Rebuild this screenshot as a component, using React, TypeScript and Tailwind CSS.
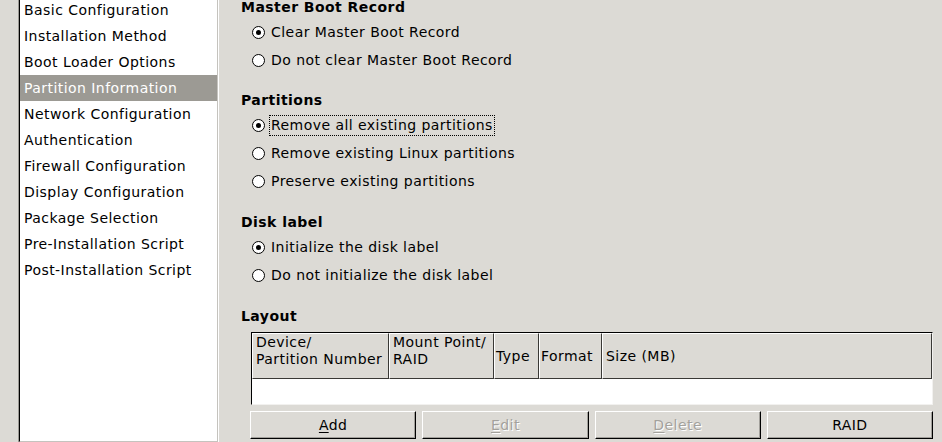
import React from "react";

const items = [
  "Basic Configuration",
  "Installation Method",
  "Boot Loader Options",
  "Partition Information",
  "Network Configuration",
  "Authentication",
  "Firewall Configuration",
  "Display Configuration",
  "Package Selection",
  "Pre-Installation Script",
  "Post-Installation Script",
];

function Radio({ label, checked, focus }: { label: string; checked?: boolean; focus?: boolean }) {
  return (
    <div className="h-[28px] flex items-center pl-[11px]">
      <span className="w-[13px] h-[13px] rounded-full border border-black bg-white flex items-center justify-center shrink-0">
        {checked && <span className="w-[5px] h-[5px] rounded-full bg-black" />}
      </span>
      <span
        className={
          "ml-[4px] px-[1px] h-[21px] flex items-center border " +
          (focus ? "border-dotted border-black" : "border-transparent")
        }
      >
        {label}
      </span>
    </div>
  );
}

function Heading({ children, className = "" }: { children: React.ReactNode; className?: string }) {
  return <div className={"h-[22px] flex items-center font-bold " + className}>{children}</div>;
}

function HeaderCell({ children, className = "", top }: { children: React.ReactNode; className?: string; top?: boolean }) {
  return (
    <div
      className={
        "h-full border-l border-t border-white border-r border-b border-r-[#3a3936] border-b-[#3a3936] px-[3px] flex leading-[17px] whitespace-nowrap " +
        (top ? "items-start " : "items-center ") +
        className
      }
    >
      {children}
    </div>
  );
}

function Button({ children, disabled }: { children: React.ReactNode; disabled?: boolean }) {
  return (
    <div
      className={
        "h-[28px] border border-t-white border-l-white border-r-black border-b-black shadow-[inset_-1px_-1px_0_#a19f9a] flex items-center justify-center " +
        (disabled ? "text-[#a3a19c] [text-shadow:1px_1px_0_#ffffff]" : "text-black")
      }
    >
      {children}
    </div>
  );
}

export default function App() {
  return (
    <div className="w-[942px] h-[442px] overflow-hidden bg-[#dcdad5] flex [font-family:'DejaVu_Sans',Verdana,sans-serif] text-[14px] tracking-[0.45px] text-black">
      {/* sidebar */}
      <div className="ml-[18px] w-[201px] h-[443px] shrink-0 border-l border-l-[#9a9893] border-r border-r-white border-b border-b-white">
        <div className="h-full bg-white border-l border-l-black border-r border-r-[#c5c3be] border-b border-b-[#c5c3be] overflow-hidden">
          <div className="-mt-[3px]">
            {items.map((it) => (
              <div
                key={it}
                className={
                  "h-[26px] flex items-center pl-[4px] whitespace-nowrap " +
                  (it === "Partition Information" ? "bg-[#9c9a94] text-white" : "")
                }
              >
                {it}
              </div>
            ))}
          </div>
        </div>
      </div>

      {/* main panel */}
      <div className="flex-1 pl-[22px] flex flex-col">
        <Heading className="-mt-[4px]">Master Boot Record</Heading>
        <Radio label="Clear Master Boot Record" checked />
        <Radio label="Do not clear Master Boot Record" />

        <Heading className="mt-[15px]">Partitions</Heading>
        <Radio label="Remove all existing partitions" checked focus />
        <Radio label="Remove existing Linux partitions" />
        <Radio label="Preserve existing partitions" />

        <Heading className="mt-[16px]">Disk label</Heading>
        <Radio label="Initialize the disk label" checked />
        <Radio label="Do not initialize the disk label" />

        <Heading className="mt-[16px]">Layout</Heading>

        <div className="mt-[5px] ml-[10px] mr-[9px] border-l border-t border-black border-r border-b border-r-[#f2f1ef] border-b-[#f2f1ef]">
          <div className="h-[46px] flex">
            <HeaderCell top className="w-[137px] shrink-0">
              <span>
                Device/
                <br />
                Partition Number
              </span>
            </HeaderCell>
            <HeaderCell top className="w-[105px] shrink-0">
              <span>
                Mount Point/
                <br />
                RAID
              </span>
            </HeaderCell>
            <HeaderCell className="w-[45px] shrink-0 !px-[1px]">Type</HeaderCell>
            <HeaderCell className="w-[63px] shrink-0 !px-[1px]">Format</HeaderCell>
            <HeaderCell className="flex-1">Size (MB)</HeaderCell>
          </div>
          <div className="h-[25px] bg-white" />
        </div>

        <div className="mt-[6px] ml-[9px] mr-[9px] grid grid-cols-4 gap-[6px]">
          <Button>
            <span>
              <span className="underline underline-offset-[2px]">A</span>dd
            </span>
          </Button>
          <Button disabled>
            <span>
              <span className="underline underline-offset-[2px]">E</span>dit
            </span>
          </Button>
          <Button disabled>
            <span>
              <span className="underline underline-offset-[2px]">D</span>elete
            </span>
          </Button>
          <Button>RAID</Button>
        </div>
      </div>
    </div>
  );
}
